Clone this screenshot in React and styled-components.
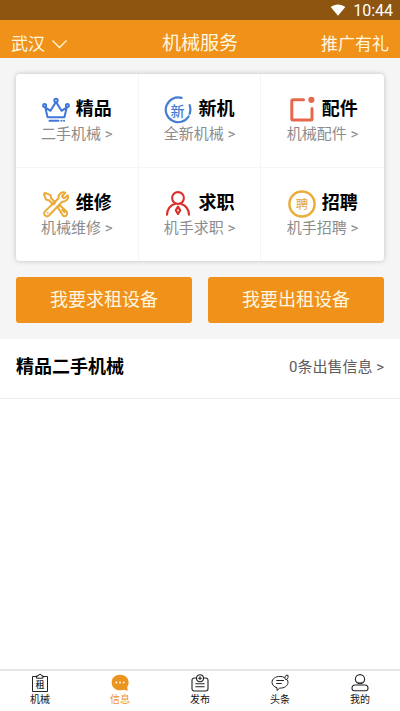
import React from "react";
import styled, { createGlobalStyle } from "styled-components";

const GlobalStyle = createGlobalStyle`
  * { box-sizing: border-box; }
  body {
    margin: 0;
    background: #fff;
    color: #000;
    font-family: Roboto, "Noto Sans CJK SC", sans-serif;
  }
  button { font: inherit; border: 0; padding: 0; background: none; cursor: pointer; }
  a { color: inherit; text-decoration: none; }
  h1, h2 { margin: 0; }
`;

const Page = styled.div`
  min-height: 100vh;
  display: flex;
  flex-direction: column;
`;

const StatusBar = styled.div`
  height: 20px;
  padding: 2px 7px 0;
  display: flex;
  align-items: center;
  justify-content: flex-end;
  gap: 7px;
  background: #8d550f;
  color: #fff;
  font-size: 16px;
  line-height: 18px;

  svg { margin-bottom: 2px; }
`;

const Header = styled.header`
  padding: 10px 11px 0;
  display: grid;
  grid-template-columns: 1fr auto 1fr;
  align-items: center;
  background: #f0911a;
  color: #fff8e0;
`;

const HeaderButton = styled.button`
  justify-self: ${(p) => (p.$end ? "end" : "start")};
  display: flex;
  align-items: center;
  gap: 6px;
  color: inherit;
  font-size: 17px;
  line-height: 28px;
`;

const HeaderTitle = styled.h1`
  font-size: 19px;
  font-weight: 400;
  line-height: 28px;
`;

const Services = styled.section`
  padding: 16px;
  background: #f5f5f5;
`;

const ServiceGrid = styled.nav`
  display: grid;
  grid-template-columns: repeat(3, 1fr);
  background: #fff;
  border-radius: 4px;
  overflow: hidden;
  box-shadow: 0 0 5px rgba(0, 0, 0, 0.22);
`;

const ServiceCard = styled.a`
  display: flex;
  flex-direction: column;
  align-items: center;
  padding: 21px 0 22px;
  border: 0 solid #f5f5f5;

  &:nth-child(-n + 3) { border-bottom-width: 1px; }
  &:not(:nth-child(3n)) { border-right-width: 1px; }
`;

const ServiceHead = styled.span`
  display: flex;
  align-items: center;
  gap: 6px;
  height: 28px;
  font-size: 18px;
  font-weight: 700;
  line-height: 28px;

  svg { margin-top: 2px; }
`;

const ServiceNote = styled.span`
  color: #8c8c8c;
  font-size: 15px;
  line-height: 22px;
`;

const Actions = styled.div`
  display: grid;
  grid-template-columns: 1fr 1fr;
  gap: 16px;
  margin-top: 16px;
`;

const ActionButton = styled.button`
  height: 46px;
  padding-bottom: 4px;
  border-radius: 3px;
  background: #f0911a;
  color: #fff8e0;
  font-size: 18px;
`;

const SectionBar = styled.section`
  display: flex;
  align-items: center;
  justify-content: space-between;
  padding: 14px 16px 17px;
  border-bottom: 1px solid #efefef;
`;

const SectionTitle = styled.h2`
  font-size: 18px;
  font-weight: 700;
  line-height: 28px;
`;

const SectionLink = styled.a`
  color: #5c5c5c;
  font-size: 15px;
  line-height: 28px;
`;

const TabBar = styled.nav`
  position: sticky;
  bottom: 0;
  display: grid;
  grid-template-columns: repeat(5, 1fr);
  margin-top: auto;
  background: #fff;
  border-top: 2px solid #e6e6e6;
`;

const Tab = styled.a`
  display: flex;
  flex-direction: column;
  align-items: center;
  padding: 2px 0 5px;
  color: ${(p) => (p.$active ? "#eb941f" : "#111")};
  font-size: 10px;
  line-height: 13px;
`;

const Glyph = styled.text`
  font-family: "Noto Sans CJK SC", sans-serif;
  font-weight: ${(p) => p.$weight || 400};
  text-anchor: middle;
`;

const Icon = ({ size = 28, color, width = 2, children }) => (
  <svg width={size} height={size} viewBox={`0 0 ${size} ${size}`} fill="none" stroke={color}
    strokeWidth={width} strokeLinecap="round" strokeLinejoin="round" aria-hidden="true">
    {children}
  </svg>
);

const CrownIcon = () => (
  <Icon color="#3f78d8" width={2}>
    <circle cx="14" cy="4.5" r="1.7" />
    <circle cx="2.6" cy="9.5" r="1.5" />
    <circle cx="25.4" cy="9.5" r="1.5" />
    <path d="M3.2 11.3 5.6 21.2h16.8l2.4-9.9-5.3 3.5L14.6 6.9h-1.2L8.5 14.8z" />
    <path d="M7.5 24.8h9M19.4 24.8h.1M22 24.8h.1" />
  </Icon>
);

const NewIcon = () => (
  <Icon color="#457dd4" width={2.2}>
    <path d="M17.6 1.9A12.4 12.4 0 1 0 24.6 20.5" />
    <path d="M25.6 9.2A12.4 12.4 0 0 1 25.6 17.8" />
    <Glyph x="13.5" y="19.5" fontSize="14" $weight={500} fill="#457dd4" stroke="none">新</Glyph>
  </Icon>
);

const PartsIcon = () => (
  <Icon color="#e5694c" width={3}>
    <path d="M15.5 3.7H4.8a1 1 0 0 0-1 1v18.4a1 1 0 0 0 1 1H23a1 1 0 0 0 1-1V12.5" />
    <circle cx="23.4" cy="3.8" r="3.1" fill="#e5694c" stroke="none" />
  </Icon>
);

const RepairIcon = () => (
  <Icon color="#eba936" width={2}>
    <path d="m3 2.8 5.5 2.3.6 3.2 4.2 4.2-2 2-4.4-4.2-3-.8L2 4.2z" />
    <path d="m15.7 17.2 2-2 6.8 6.3c1.5 1.5.6 4.5-1.8 4.8-.7 0-1.3-.3-1.8-.8z" />
    <path d="m20.2 19.8 2.4 2.4" />
    <path d="M23.3 2.7c-3.2-1.5-7.3 1.2-6.7 5.5L3.2 21.1c-3 3 1.1 7 4 4.1l12.9-13.5c3.9.5 6.8-3 5.7-6.4L22 8.2l-2.1-2z" />
    <circle cx="5.6" cy="22.8" r=".4" strokeWidth="1" />
  </Icon>
);

const JobIcon = () => (
  <Icon color="#d9302a" width={2.1}>
    <circle cx="14" cy="8" r="5.9" />
    <path d="M3 24.8c.2-5.8 3.2-9.4 8.2-11M25 24.8c-.2-5.8-3.2-9.4-8.2-11" />
    <path d="m14 16.6 2.2 3.8-2.2 3.6-2.2-3.6z" />
  </Icon>
);

const HireIcon = () => (
  <Icon color="#e9ad38" width={2.5}>
    <circle cx="14" cy="14" r="12.6" />
    <Glyph x="14" y="18.5" fontSize="12.5" fill="#e5a536" stroke="none">聘</Glyph>
  </Icon>
);

const MachineTabIcon = () => (
  <Icon size={20} color="#222" width={1}>
    <path d="M7 3.5H2.5v15h15v-15H13" />
    <path d="M7 2.8h1.5a1.5 1.5 0 0 1 3 0H13v2.4H7z" />
    <Glyph x="10" y="15" fontSize="9" $weight={500} fill="#222" stroke="none">租</Glyph>
  </Icon>
);

const MessageTabIcon = () => (
  <Icon size={20} color="none">
    <path fill="#eb941f" d="M10 1.8c5 0 8.6 3.2 8.6 7.7 0 1.7-.5 3.2-1.4 4.5l.5 3.7-4-1c-1 .4-2.3.6-3.7.6-5 0-8.3-3.2-8.3-7.8S5 1.8 10 1.8z" />
    <g fill="#fff"><circle cx="6.3" cy="9.5" r=".9" /><circle cx="10" cy="9.5" r=".9" /><circle cx="13.7" cy="9.5" r=".9" /></g>
  </Icon>
);

const PublishTabIcon = () => (
  <Icon size={20} color="#222" width={1.1}>
    <path d="M6 5H4.2A2.2 2.2 0 0 0 2 7.2v8.6A2.2 2.2 0 0 0 4.2 18h11.6a2.2 2.2 0 0 0 2.2-2.2V7.2A2.2 2.2 0 0 0 15.8 5H14" />
    <circle cx="10" cy="5.2" r="3.5" />
    <path d="M10 3.6v3.2M8.6 5.2h2.8M5.8 10.7h8.4M5.8 13.7h8.4" />
  </Icon>
);

const NewsTabIcon = () => (
  <Icon size={20} color="#222" width={1}>
    <path d="M14.4 4.5C13.2 3.8 11.8 3.4 10 3.4c-4.5 0-8 2.5-8 5.8 0 2.6 2 4.7 5 5.5v2.8l2.7-2.4c4.8.2 8.3-2.3 8.3-5.8 0-.8-.2-1.6-.6-2.3" />
    <path d="M6.7 7.5h6.8M6.7 10.5h4.6M15 5.3c0-1.4.3-2.5 1.2-3h1.8v2.4l-1.6 2z" />
  </Icon>
);

const MineTabIcon = () => (
  <Icon size={20} color="#222" width={1.1}>
    <circle cx="10" cy="6.2" r="4.6" />
    <path d="M6.5 9c1.8 1.2 5.2 1.2 7 0" strokeWidth=".8" />
    <path d="M5 12h10c2 0 3 1.4 3 3.2 0 1.7-.9 2.5-2.3 2.5H4.3c-1.4 0-2.3-.8-2.3-2.5C2 13.4 3 12 5 12z" />
  </Icon>
);

const services = [
  { title: "精品", note: "二手机械", Mark: CrownIcon },
  { title: "新机", note: "全新机械", Mark: NewIcon },
  { title: "配件", note: "机械配件", Mark: PartsIcon },
  { title: "维修", note: "机械维修", Mark: RepairIcon },
  { title: "求职", note: "机手求职", Mark: JobIcon },
  { title: "招聘", note: "机手招聘", Mark: HireIcon },
];

const tabs = [
  { label: "机械", Mark: MachineTabIcon },
  { label: "信息", Mark: MessageTabIcon, active: true },
  { label: "发布", Mark: PublishTabIcon },
  { label: "头条", Mark: NewsTabIcon },
  { label: "我的", Mark: MineTabIcon },
];

export default function App() {
  return (
    <Page lang="zh-CN">
      <GlobalStyle />
      <StatusBar>
        <svg width="16" height="12" viewBox="0 0 16 12" fill="#fff" aria-hidden="true">
          <path d="M.7 3C5-.4 11-.4 15.3 3L8 11.7z" />
        </svg>
        <span>10:44</span>
      </StatusBar>
      <Header>
        <HeaderButton type="button">
          武汉
          <svg width="17" height="10" viewBox="0 0 17 10" fill="none" stroke="currentColor" strokeWidth="1.3" aria-hidden="true">
            <path d="m1.5 1.5 7 7 7-7" />
          </svg>
        </HeaderButton>
        <HeaderTitle>机械服务</HeaderTitle>
        <HeaderButton type="button" $end>推广有礼</HeaderButton>
      </Header>
      <main>
        <Services>
          <ServiceGrid>
            {services.map(({ title, note, Mark }) => (
              <ServiceCard href="#" key={title}>
                <ServiceHead><Mark />{title}</ServiceHead>
                <ServiceNote>{note} &gt;</ServiceNote>
              </ServiceCard>
            ))}
          </ServiceGrid>
          <Actions>
            <ActionButton type="button">我要求租设备</ActionButton>
            <ActionButton type="button">我要出租设备</ActionButton>
          </Actions>
        </Services>
        <SectionBar>
          <SectionTitle>精品二手机械</SectionTitle>
          <SectionLink href="#">0条出售信息 &gt;</SectionLink>
        </SectionBar>
      </main>
      <TabBar>
        {tabs.map(({ label, Mark, active }) => (
          <Tab href="#" key={label} $active={active} aria-current={active ? "page" : undefined}>
            <Mark />
            {label}
          </Tab>
        ))}
      </TabBar>
    </Page>
  );
}
